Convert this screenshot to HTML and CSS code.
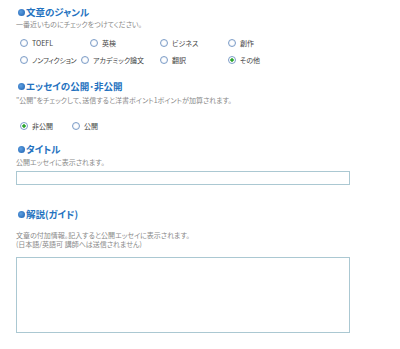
FILE: index.html
```html
<!DOCTYPE html>
<html lang="ja">
<head>
    <meta charset="UTF-8">
    <title>エッセイ投稿</title>
    <link rel="stylesheet" href="styles.css">
</head>
<body>
    <form class="essay-form">
        <h3 class="section-title"><span class="bullet"></span>文章のジャンル</h3>
        <p class="note">一番近いものにチェックをつけてください。</p>
        <div class="options">
            <div class="option-row">
                <label class="option w70"><input type="radio" name="genre">TOEFL</label>
                <label class="option w70"><input type="radio" name="genre">英検</label>
                <label class="option w68"><input type="radio" name="genre">ビジネス</label>
                <label class="option"><input type="radio" name="genre">創作</label>
            </div>
            <div class="option-row">
                <label class="option w61"><input type="radio" name="genre"><span class="tight">ノンフィクション</span></label>
                <label class="option w79"><input type="radio" name="genre">アカデミック論文</label>
                <label class="option w68"><input type="radio" name="genre">翻訳</label>
                <label class="option"><input type="radio" name="genre" checked>その他</label>
            </div>
        </div>

        <h3 class="section-title gap-lg"><span class="bullet"></span>エッセイの公開･非公開</h3>
        <p class="note">"公開"をチェックして、送信すると洋書ポイント1ポイントが加算されます。</p>
        <div class="options public-options">
            <div class="option-row">
                <label class="option w52"><input type="radio" name="public" checked>非公開</label>
                <label class="option"><input type="radio" name="public">公開</label>
            </div>
        </div>

        <h3 class="section-title gap-md"><span class="bullet"></span>タイトル</h3>
        <p class="note">公開エッセイに表示されます。</p>
        <input type="text" class="text-field" name="title">

        <h3 class="section-title gap-xl"><span class="bullet"></span>解説(ガイド)</h3>
        <p class="note guide-note">文章の付加情報。記入すると公開エッセイに表示されます。<br>(日本語/英語可 講師へは送信されません)</p>
        <textarea class="text-area" name="guide"></textarea>
    </form>
</body>
</html>
```

FILE: styles.css
```css
body {
    margin: 0;
    background-color: #fff;
    font-family: "Noto Sans CJK JP", "Noto Sans", sans-serif;
    font-feature-settings: "palt";
    color: #444;
}
.essay-form {
    padding: 0 16px;
    width: 334px;
}
.section-title {
    display: flex;
    align-items: center;
    margin: 6px 0 0 2px;
    height: 12px;
    line-height: 12px;
    font-size: 9.5px;
    font-weight: bold;
    color: #2472c0;
}
.bullet {
    display: inline-block;
    width: 7px;
    height: 7px;
    margin-right: 1px;
    border-radius: 50%;
    background: radial-gradient(circle at 40% 40%, #5f9fe0, #1a5fb0);
}
.gap-lg {
    margin-top: 12px;
}
.gap-md {
    margin-top: 9px;
}
.gap-xl {
    margin-top: 23px;
}
.note {
    margin: 1px 0 0;
    font-size: 7px;
    line-height: 10px;
    color: #8a8a8a;
}
.gap-lg + .note {
    margin-top: 3px;
}
.gap-md + .note {
    margin-top: 2px;
}
.guide-note {
    margin-top: 11px !important;
    line-height: 9px;
}
.options {
    margin-top: 5px;
    padding-left: 4px;
}
.public-options {
    margin-top: 12px;
}
.option-row {
    display: flex;
    height: 17px;
    align-items: center;
}
.option {
    display: flex;
    align-items: center;
    font-size: 7px;
    color: #444;
    white-space: nowrap;
}
.tight {
    letter-spacing: -0.3px;
}
.w52 { width: 52px; }
.w61 { width: 61px; }
.w68 { width: 68px; }
.w70 { width: 70px; }
.w79 { width: 79px; }
.option input {
    appearance: none;
    -webkit-appearance: none;
    box-sizing: border-box;
    width: 8px;
    height: 8px;
    margin: 0 4px 0 0;
    border: 1px solid #7d9dc8;
    border-radius: 50%;
    background: radial-gradient(circle, #fff 30%, #e3e9f2);
    flex-shrink: 0;
}
.option input:checked {
    background: radial-gradient(circle, #2ca52c 0 1.5px, #fff 1.8px);
}
.text-field {
    display: block;
    box-sizing: border-box;
    width: 334px;
    height: 14px;
    margin: 4px 0 0;
    padding: 0 2px;
    border: 1px solid #abc8d2;
    font-size: 8px;
}
.text-area {
    display: block;
    box-sizing: border-box;
    width: 334px;
    height: 76px;
    margin: 8px 0 0;
    padding: 2px;
    border: 1px solid #abc8d2;
    resize: none;
    font-size: 8px;
}
```
